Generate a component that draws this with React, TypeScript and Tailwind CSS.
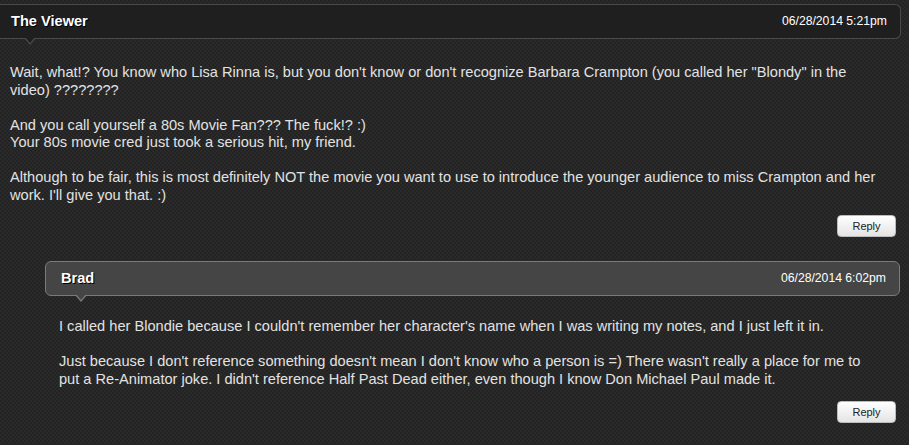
import React from "react";

interface CommentProps {
  author: string;
  date: string;
  reply?: boolean;
  children: React.ReactNode;
}

function Comment({ author, date, reply, children }: CommentProps) {
  const head = reply
    ? "border border-[#7a7a7a] bg-[#454545] rounded-md"
    : "border-y border-r border-[#4a4a4a] bg-[#1f1f1f] rounded-r-md";
  return (
    <div className={reply ? "ml-[45px] mr-[9px]" : "mr-[8px]"}>
      <div className={`relative h-[35px] flex items-center justify-between ${head} ${reply ? "pl-[15px]" : "pl-[11px]"} pr-[13px]`}>
        <span className="text-[14.6px] font-bold text-white [text-shadow:1px_1px_0_#000]">{author}</span>
        <span className="text-[12.2px] text-white">{date}</span>
        <span
          className={`absolute top-full ${reply ? "left-[29px]" : "left-[24px]"} w-0 h-0 border-x-[6px] border-x-transparent border-t-[7px] ${reply ? "border-t-[#7a7a7a]" : "border-t-[#4a4a4a]"}`}
        />
        <span
          className={`absolute top-[calc(100%-1px)] ${reply ? "left-[30px]" : "left-[25px]"} w-0 h-0 border-x-[5px] border-x-transparent border-t-[6px] ${reply ? "border-t-[#454545]" : "border-t-[#1f1f1f]"}`}
        />
      </div>
      <div className={`${reply ? "pl-[14px] pt-[22px]" : "pl-[10px] pt-[25px]"} pr-[20px] text-[14.6px] leading-[17.5px] text-[#e2e2e2]`}>
        {children}
      </div>
      <div className={`flex justify-end ${reply ? "pr-[4px] pt-[13px]" : "pr-[5px] pt-[11px]"}`}>
        <button className="w-[59px] h-[22px] rounded-[4px] border border-[#bbb] bg-gradient-to-b from-white to-[#e4e4e4] text-[11px] text-[#222]">
          Reply
        </button>
      </div>
    </div>
  );
}

export default function App() {
  return (
    <div
      className="w-[909px] h-[445px] overflow-hidden pt-[4px] bg-[repeating-conic-gradient(#2a2a2a_0_25%,#232323_0_50%)] bg-[length:4px_4px]"
      style={{ fontFamily: '"Liberation Sans", Arial, sans-serif' }}
    >
      <Comment author="The Viewer" date="06/28/2014 5:21pm">
        <p>
          Wait, what!? You know who Lisa Rinna is, but you don't know or don't recognize Barbara Crampton (you called her "Blondy" in the video) ????????
          <br />
          <br />
          And you call yourself a 80s Movie Fan??? The fuck!? :)
          <br />
          Your 80s movie cred just took a serious hit, my friend.
          <br />
          <br />
          Although to be fair, this is most definitely NOT the movie you want to use to introduce the younger audience to miss Crampton and her work. I'll give you that. :)
        </p>
      </Comment>
      <div className="mt-[24px]">
        <Comment author="Brad" date="06/28/2014 6:02pm" reply>
          <p>
            I called her Blondie because I couldn't remember her character's name when I was writing my notes, and I just left it in.
            <br />
            <br />
            Just because I don't reference something doesn't mean I don't know who a person is =) There wasn't really a place for me to put a Re-Animator joke. I didn't reference Half Past Dead either, even though I know Don Michael Paul made it.
          </p>
        </Comment>
      </div>
    </div>
  );
}
